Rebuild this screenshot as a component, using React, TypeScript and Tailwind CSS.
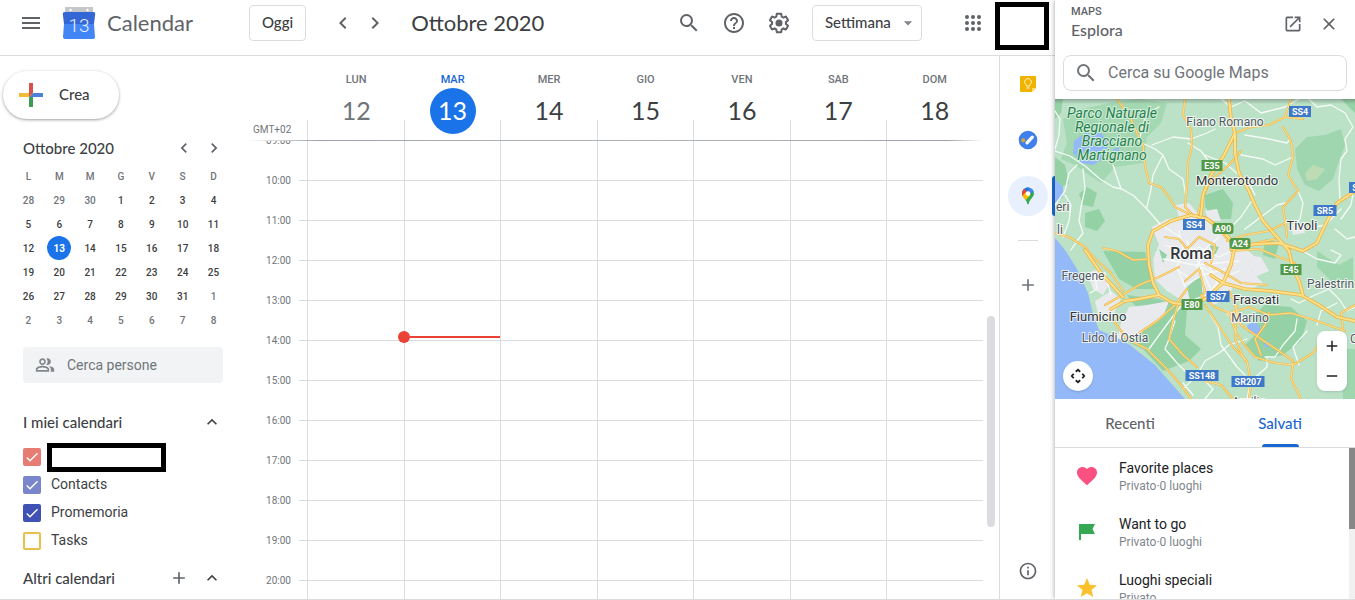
import { useState } from "react";
import type { ReactNode } from "react";
import {
  MdAdd,
  MdArrowDropDown,
  MdCheck,
  MdChevronLeft,
  MdChevronRight,
  MdClose,
  MdExpandLess,
  MdFavorite,
  MdHelpOutline,
  MdInfoOutline,
  MdMenu,
  MdOpenInNew,
  MdOutlinePeopleAlt,
  MdRemove,
  MdSearch,
  MdStar,
} from "react-icons/md";

const MINI_DAYS = ["L", "M", "M", "G", "V", "S", "D"];

const MINI_WEEKS = [
  [28, 29, 30, 1, 2, 3, 4],
  [5, 6, 7, 8, 9, 10, 11],
  [12, 13, 14, 15, 16, 17, 18],
  [19, 20, 21, 22, 23, 24, 25],
  [26, 27, 28, 29, 30, 31, 1],
  [2, 3, 4, 5, 6, 7, 8],
];

const WEEK = [
  { name: "LUN", day: 12 },
  { name: "MAR", day: 13 },
  { name: "MER", day: 14 },
  { name: "GIO", day: 15 },
  { name: "VEN", day: 16 },
  { name: "SAB", day: 17 },
  { name: "DOM", day: 18 },
];

const TODAY = 13;
const FIRST_HOUR = 9;
const HOUR_HEIGHT = 40;
const HOURS = Array.from({ length: 12 }, (_, i) => FIRST_HOUR + i);
const NOW = 13.9;

const CALENDARS = [
  { id: "owner", label: "", color: "border-[#e67c73] bg-[#e67c73]", checked: true },
  { id: "contacts", label: "Contacts", color: "border-[#7986cb] bg-[#7986cb]", checked: true },
  { id: "reminders", label: "Promemoria", color: "border-[#3f51b5] bg-[#3f51b5]", checked: true },
  { id: "tasks", label: "Tasks", color: "border-[#e9c04a] bg-white", checked: false },
];

const PLACES = [
  { name: "Favorite places", info: "Privato·0 luoghi", icon: <MdFavorite size={24} className="text-[#fa5082]" /> },
  { name: "Want to go", info: "Privato·0 luoghi", icon: <FlagIcon /> },
  { name: "Luoghi speciali", info: "Privato", icon: <MdStar size={24} className="text-[#fbc02d]" /> },
];

const googleFont = "font-['Google_Sans',Lato,sans-serif]";

function FlagIcon() {
  return (
    <svg width="24" height="24" viewBox="0 0 24 24">
      <path d="M4 4H20L17.500 9L20 14H6V20H4Z" fill="#34a853" />
    </svg>
  );
}

function GearIcon() {
  return (
    <svg width="24" height="24" viewBox="0 0 24 24" fill="currentColor">
      <path d="M13.85 22.25h-3.7c-.74 0-1.36-.54-1.45-1.27l-.27-1.89c-.27-.14-.53-.29-.79-.46l-1.8.72c-.7.26-1.47-.03-1.81-.65L2.2 15.53c-.35-.66-.2-1.44.36-1.88l1.53-1.19c-.01-.15-.02-.3-.02-.46 0-.15.01-.31.02-.46l-1.52-1.19c-.59-.45-.74-1.26-.37-1.88l1.85-3.19c.34-.62 1.11-.9 1.79-.63l1.81.73c.26-.17.52-.32.78-.46l.27-1.91c.09-.7.71-1.25 1.44-1.25h3.7c.74 0 1.36.54 1.45 1.27l.27 1.89c.27.14.53.29.79.46l1.8-.72c.71-.26 1.48.03 1.82.65l1.84 3.18c.36.66.2 1.44-.36 1.88l-1.52 1.19c.01.15.02.3.02.46s-.01.31-.02.46l1.52 1.19c.56.45.72 1.23.37 1.86l-1.86 3.22c-.34.62-1.11.9-1.8.63l-1.8-.72c-.26.17-.52.32-.78.46l-.27 1.91c-.1.68-.72 1.22-1.46 1.22zm-3.23-2h2.76l.37-2.55.53-.22c.44-.18.88-.44 1.34-.78l.45-.34 2.38.96 1.38-2.4-2.03-1.58.07-.56c.03-.26.06-.51.06-.78s-.03-.53-.06-.78l-.07-.56 2.03-1.58-1.39-2.4-2.39.96-.45-.35c-.42-.32-.87-.58-1.33-.77l-.52-.22-.37-2.55h-2.76l-.37 2.55-.53.21c-.44.19-.88.44-1.34.79l-.45.33-2.38-.95-1.39 2.39 2.03 1.58-.07.56a7 7 0 0 0-.06.79c0 .26.02.53.06.78l.07.56-2.03 1.58 1.38 2.4 2.39-.96.45.35c.43.33.86.58 1.33.77l.53.22.38 2.55z" />
      <circle cx="12" cy="12" r="3.500" />
    </svg>
  );
}

function AppsIcon() {
  return (
    <svg width="24" height="24" viewBox="0 0 24 24" fill="currentColor">
      {[6, 12, 18].map((cy) => [6, 12, 18].map((cx) => <circle key={`${cx}-${cy}`} cx={cx} cy={cy} r="2" />))}
    </svg>
  );
}

function CalendarLogo() {
  return (
    <svg width="34" height="34" viewBox="0 0 34 34">
      <path d="M3 1H31V8H3Z" fill="#c4c6c9" />
      <circle cx="8.500" cy="4" r="1.200" fill="#fff" />
      <circle cx="25.500" cy="4" r="1.200" fill="#fff" />
      <path d="M3 6H31Q33.500 6 33.200 8L32 18H2L.8 8Q.5 6 3 6Z" fill="#3367d6" />
      <path d="M2 18H32L33 31Q33 33 31 33H3Q1 33 1 31Z" fill="#4285f4" />
      <text x="17" y="26" textAnchor="middle" fontSize="19" fill="#e8f0fe" className="font-['Roboto',sans-serif] font-light">
        13
      </text>
    </svg>
  );
}

function KeepIcon() {
  return (
    <svg width="20" height="20" viewBox="0 0 20 20">
      <path d="M3 2H17Q18 2 18 3V14L14 18H3Q2 18 2 17V3Q2 2 3 2Z" fill="#f0b400" />
      <path d="M14 18V14H18Z" fill="#fbdc7c" />
      <path d="M8.300 12V10.800A3.300 3.300 0 1 1 11.700 10.800V12ZM8.300 14H11.700" fill="none" stroke="#fff3cf" strokeWidth="1" />
    </svg>
  );
}

function TasksIcon() {
  return (
    <svg width="20" height="20" viewBox="0 0 20 20">
      <circle cx="10" cy="10" r="9.300" fill="#4080ec" />
      <path d="M9 12.800L14.300 7.200" stroke="#fff" strokeWidth="3.200" strokeLinecap="round" />
      <circle cx="5.200" cy="10.300" r="2.100" fill="#d3a83c" />
    </svg>
  );
}

function PinIcon() {
  return (
    <svg width="20" height="20" viewBox="0 0 20 20">
      <clipPath id="pin">
        <path d="M10 1.500A6 6 0 0 0 4 7.600C4 11.300 8.200 13 9.200 17.400Q10 19.500 10.800 17.400C11.800 13 16 11.300 16 7.600A6 6 0 0 0 10 1.500Z" />
      </clipPath>
      <g clipPath="url(#pin)">
        <path d="M0 0H20V20H0Z" fill="#34a853" />
        <path d="M8 0H20V3L10 9Z" fill="#4285f4" />
        <path d="M9 0L11 3L6 9L0 5V0Z" fill="#1a73e8" />
        <path d="M0 2L6 2L9 6L5 12L0 12Z" fill="#ea4335" />
        <path d="M3 11L8 6L12.500 9L6 16Z" fill="#fbbc04" />
      </g>
      <circle cx="10" cy="7.600" r="2.300" fill="#fff" />
    </svg>
  );
}

function MoveIcon() {
  return (
    <svg width="16" height="16" viewBox="0 0 18 18" fill="none" stroke="#202124" strokeWidth="2">
      <path d="M6.500 4.200L9 2L11.500 4.200M6.500 13.800L9 16L11.500 13.800M4.200 6.500L2 9L4.200 11.500M13.800 6.500L16 9L13.800 11.500" />
    </svg>
  );
}

function IconButton({ label, children }: { label: string; children: ReactNode }) {
  return (
    <button type="button" aria-label={label} className="flex shrink-0 items-center justify-center text-[#5f6368]">
      {children}
    </button>
  );
}

function Header() {
  return (
    <header className="flex h-14 shrink-0 items-start border-b border-[#dadce0] pr-[6px]">
      <div className="flex h-[46px] flex-1 items-center">
        <div className="flex w-[249px] shrink-0 items-center pl-[19px]">
          <IconButton label="Menu principale">
            <MdMenu size={24} />
          </IconButton>
          <a href="#" className={`ml-[19px] flex items-center gap-[11px] text-[22px] text-[#5f6368] ${googleFont}`}>
            <CalendarLogo />
            <span className="pb-[2px]">Calendar</span>
          </a>
        </div>
        <button
          type="button"
          className={`h-9 rounded border border-[#dadce0] px-3 pb-[2px] text-[15px] font-medium text-[#3c4043] ${googleFont}`}
        >
          Oggi
        </button>
        <div className="ml-[25px] flex gap-2">
          <IconButton label="Settimana precedente">
            <MdChevronLeft size={24} />
          </IconButton>
          <IconButton label="Settimana successiva">
            <MdChevronRight size={24} />
          </IconButton>
        </div>
        <h1 className={`ml-6 flex-1 pb-[2px] text-[22px] text-[#3c4043] ${googleFont}`}>Ottobre 2020</h1>
        <div className="flex items-center gap-[21px]">
          <IconButton label="Cerca">
            <MdSearch size={24} />
          </IconButton>
          <IconButton label="Assistenza">
            <MdHelpOutline size={24} />
          </IconButton>
          <IconButton label="Impostazioni">
            <GearIcon />
          </IconButton>
          <div className="relative">
            <select
              aria-label="Visualizzazione"
              className={`h-9 w-[110px] appearance-none rounded border border-[#dadce0] bg-white pb-[2px] pl-3 text-[15px] font-medium text-[#3c4043] ${googleFont}`}
            >
              <option>Settimana</option>
            </select>
            <MdArrowDropDown size={20} className="pointer-events-none absolute top-2 right-1 text-[#80868b]" />
          </div>
        </div>
        <div className="mr-[10px] ml-[39px]">
          <IconButton label="App Google">
            <AppsIcon />
          </IconButton>
        </div>
      </div>
      <button type="button" aria-label="Account" className="mt-[2px] h-12 w-[54px] border-5 border-black bg-white" />
    </header>
  );
}

function MiniCalendar() {
  return (
    <section className="mt-[17px]">
      <div className="flex h-6 items-center pr-6 pl-[23px]">
        <h2 className={`flex-1 text-[15px] font-medium text-[#3c4043] ${googleFont}`}>Ottobre 2020</h2>
        <div className="flex gap-[10px]">
          <IconButton label="Mese precedente">
            <MdChevronLeft size={20} />
          </IconButton>
          <IconButton label="Mese successivo">
            <MdChevronRight size={20} />
          </IconButton>
        </div>
      </div>
      <table className="mt-1 ml-[13px] w-[216px] table-fixed text-center text-[10px] font-medium">
        <thead>
          <tr className="h-6 text-[#70757a]">
            {MINI_DAYS.map((d, i) => (
              <th key={i} className="p-0 font-medium">
                {d}
              </th>
            ))}
          </tr>
        </thead>
        <tbody>
          {MINI_WEEKS.map((week, w) => (
            <tr key={w} className="h-6">
              {week.map((day) => {
                const outside = (w === 0 && day > 20) || (w > 3 && day < 10);
                const today = day === TODAY && !outside;
                return (
                  <td key={day} className={outside ? "p-0 text-[#70757a]" : "p-0 text-[#3c4043]"}>
                    <span
                      className={
                        today
                          ? "mx-auto flex size-6 items-center justify-center rounded-full bg-[#1a73e8] font-bold text-white"
                          : "mx-auto flex size-6 items-center justify-center"
                      }
                    >
                      {day}
                    </span>
                  </td>
                );
              })}
            </tr>
          ))}
        </tbody>
      </table>
    </section>
  );
}

function CalendarList() {
  const [checked, setChecked] = useState<Record<string, boolean>>(
    Object.fromEntries(CALENDARS.map((c) => [c.id, c.checked]))
  );

  return (
    <ul className="mt-[11px] pl-[23px]">
      {CALENDARS.map((cal) => (
        <li key={cal.id} className="flex h-7 items-center">
          <label className="flex items-center text-sm text-[#3c4043]">
            <span className="relative flex size-[18px]">
              <input
                type="checkbox"
                aria-label={cal.label || "Calendario personale"}
                checked={checked[cal.id]}
                onChange={(e) => setChecked({ ...checked, [cal.id]: e.target.checked })}
                className={`size-[18px] appearance-none rounded-[2px] border-2 ${cal.color}`}
              />
              {checked[cal.id] && (
                <MdCheck size={16} className="pointer-events-none absolute top-px left-px text-white" />
              )}
            </span>
            {cal.label ? (
              <span className="ml-[10px] pb-[2px]">{cal.label}</span>
            ) : (
              <span className="ml-[6px] h-[29px] w-[119px] border-5 border-black bg-white" />
            )}
          </label>
        </li>
      ))}
    </ul>
  );
}

function Sidebar() {
  return (
    <aside className="w-[248px] shrink-0 overflow-hidden pt-[15px]">
      <button
        type="button"
        className={`ml-[3px] flex h-12 w-[116px] items-center gap-4 rounded-full bg-white pl-4 text-[15px] font-medium text-[#3c4043] shadow-[0_1px_2px_0_rgba(60,64,67,0.3),0_1px_3px_1px_rgba(60,64,67,0.15)] ${googleFont}`}
      >
        <svg width="24" height="24" viewBox="0 0 24 24">
          <path d="M14 10H24V14H10Z" fill="#4b80d9" />
          <path d="M10 14H14V24H10Z" fill="#3c9b54" />
          <path d="M0 10H14L10 14H0Z" fill="#f0bd35" />
          <path d="M10 0H14V10L10 14Z" fill="#d8504a" />
        </svg>
        <span className="pb-[2px]">Crea</span>
      </button>
      <MiniCalendar />
      <label className="mt-[15px] ml-[23px] flex h-9 w-[200px] items-center gap-3 rounded bg-[#f1f3f4] pl-3 text-[#80868b]">
        <MdOutlinePeopleAlt size={20} className="shrink-0" />
        <input
          aria-label="Cerca persone"
          placeholder="Cerca persone"
          className="w-full bg-transparent text-sm placeholder:text-[#70757a]"
        />
      </label>
      <div className="mt-[29px] flex h-5 items-center pr-[26px] pl-[23px]">
        <h2 className={`flex-1 text-[15px] font-medium text-[#3c4043] ${googleFont}`}>I miei calendari</h2>
        <IconButton label="Comprimi i miei calendari">
          <MdExpandLess size={20} className="text-[#3c4043]" />
        </IconButton>
      </div>
      <CalendarList />
      <div className="mt-[13px] flex h-5 items-center gap-[13px] pr-[26px] pl-[23px]">
        <h2 className={`flex-1 text-[15px] font-medium text-[#3c4043] ${googleFont}`}>Altri calendari</h2>
        <IconButton label="Aggiungi calendario">
          <MdAdd size={20} />
        </IconButton>
        <IconButton label="Comprimi altri calendari">
          <MdExpandLess size={20} className="text-[#3c4043]" />
        </IconButton>
      </div>
    </aside>
  );
}

function WeekView() {
  return (
    <main className="flex min-w-0 flex-1">
      <div className="flex min-w-0 flex-1 flex-col">
        <div className="flex h-[84px] shrink-0">
          <div className="flex w-[59px] shrink-0 items-end pb-[3px] pl-[5px] text-[10px] text-[#70757a]">GMT+02</div>
          <div className="flex-1">
            <div className="grid h-[84px] grid-cols-7 pl-px">
              {WEEK.map(({ name, day }) => {
                const today = day === TODAY;
                return (
                  <div key={day} className="flex flex-col items-center pt-4">
                    <span className={`text-[11px] leading-4 font-medium ${today ? "text-[#1967d2]" : "text-[#70757a]"}`}>
                      {name}
                    </span>
                    <span
                      className={`flex size-[46px] items-center justify-center rounded-full text-[25px] ${googleFont} ${
                        today ? "bg-[#1a73e8] text-white" : day < TODAY ? "text-[#70757a]" : "text-[#3c4043]"
                      }`}
                    >
                      {day}
                    </span>
                  </div>
                );
              })}
            </div>
            <div className="-mt-5 grid h-5 grid-cols-7">
              {WEEK.map(({ day }) => (
                <div key={day} className="border-l border-[#dadce0]" />
              ))}
            </div>
          </div>
        </div>
        <div className="h-px shrink-0 bg-linear-to-r from-transparent via-[#9aa0a6] via-10% to-transparent" />
        <div className="-mt-px h-px shrink-0 bg-linear-to-r from-transparent via-[#9aa0a6] via-95% to-transparent" />
        <div className="flex min-h-0 flex-1 overflow-hidden">
          <div className="-mt-[21px] w-[43px] shrink-0 text-right text-[10px] text-[#70757a]">
            {HOURS.map((h) => (
              <div key={h} className="flex h-10 items-center justify-end">
                {String(h).padStart(2, "0")}:00
              </div>
            ))}
          </div>
          <div className="ml-2 w-2 shrink-0">
            {HOURS.map((h) => (
              <div key={h} className="h-10 border-b border-[#dadce0]" />
            ))}
          </div>
          <div className="grid flex-1 grid-cols-7">
            {WEEK.map(({ day }) => (
              <div key={day} className="relative border-l border-[#dadce0]">
                {HOURS.map((h) => (
                  <div key={h} className="h-10 border-b border-[#dadce0]" />
                ))}
                {day === TODAY && (
                  <div
                    className="absolute -left-[7px] right-0 z-10 flex items-center"
                    style={{ top: (NOW - FIRST_HOUR) * HOUR_HEIGHT - 6 }}
                  >
                    <span className="size-3 rounded-full bg-[#ea4335]" />
                    <span className="h-[2px] flex-1 bg-[#ea4335]" />
                  </div>
                )}
              </div>
            ))}
          </div>
        </div>
      </div>
      <div className="flex w-4 shrink-0 flex-col items-center pt-[260px]">
        <div className="h-[211px] w-2 rounded-full bg-[#dadce0]" />
      </div>
    </main>
  );
}

function Rail() {
  return (
    <nav className="flex w-14 shrink-0 flex-col items-center border-l border-[#dadce0] pt-2">
      <button type="button" aria-label="Keep" className="flex size-10 items-center justify-center">
        <KeepIcon />
      </button>
      <button type="button" aria-label="Tasks" className="mt-4 flex size-10 items-center justify-center">
        <TasksIcon />
      </button>
      <div className="mt-4 flex w-full items-center justify-end">
        <button type="button" aria-label="Maps" className="mr-1 flex size-10 items-center justify-center rounded-full bg-[#e8f0fe]">
          <PinIcon />
        </button>
        <span className="h-10 w-[3px] rounded-l bg-[#1967d2]" />
      </div>
      <div className="mt-6 h-px w-5 bg-[#dadce0]" />
      <button type="button" aria-label="Componenti aggiuntivi" className="mt-[34px] text-[#70757a]">
        <MdAdd size={20} />
      </button>
      <button type="button" aria-label="Informazioni" className="mt-auto mb-[18px] text-[#5f6368]">
        <MdInfoOutline size={20} />
      </button>
    </nav>
  );
}

const MINOR_ROADS = [
  "M0 52L15 57L30 67L45 80L58 88L67 90L79 97L92 110L105 125L125 138",
  "M0 12L5 20L4 36L0 50M22 66L14 74L10 92L0 106",
  "M28 70L30 90L26 108L24 122L28 134L22 142L16 151",
  "M10 96L16 106L14 122L8 138",
  "M58 66L64 84L66 90",
  "M85 43L100 50L108 56L114 70L128 80L131 98",
  "M108 56L98 76L96 90L92 108",
  "M97 46L118 38L136 40L152 34L160 30",
  "M104 8L92 14L88 26L84 42",
  "M133 44L146 52L152 60L158 70",
  "M190 36L214 40L232 44L235 40",
  "M186 56L208 60L220 66L238 58",
  "M150 56L170 64L184 76L196 88L200 96",
  "M166 0L176 8L190 2L206 14L230 8L244 0",
  "M254 0L262 8L276 6L290 14L298 28L290 40L292 52L286 60L284 80L285 100",
  "M243 92L248 104L245 120L236 128M190 130L206 118L222 106L230 104",
  "M174 130L186 118L198 100",
  "M280 130L292 140L300 138M286 120L296 106L300 84",
  "M250 130L270 126L286 110",
  "M236 200L244 204L260 196L274 190L284 200L292 212L300 208",
  "M246 151L262 160L280 164L286 156L276 151",
  "M242 220L240 232L228 246L220 258L210 258",
  "M192 240L174 246L164 254L150 262L142 276L128 290",
  "M155 215L163 228L166 246L182 268L190 276",
  "M120 222L114 240L110 250L122 264L136 278L150 282",
  "M212 258L212 268L196 282L192 300",
  "M150 282L158 290L150 300M128 284L138 296",
  "M35 194L42 190L40 176L50 174L56 196",
  "M94 250L110 228L128 204L152 196L172 180",
  "M150 200L162 184L154 166L160 150",
  "M120 170L134 178L148 168L166 180L184 172",
  "M110 146L128 154L144 148L164 158L180 150",
  "M124 132L128 150L122 168L130 188",
  "M164 138L150 150L142 168L150 186",
  "M132 142L146 168L158 196M108 160L140 166L184 162M130 186L148 176L170 170",
  "M262 226L266 212L282 204M244 266L238 248L252 232",
];

const MAIN_ROADS = [
  "M62 0L72 14L78 24L82 34L88 46L90 66L94 84L106 88L114 98L120 108L132 114L134 116",
  "M130 0L128 16L136 30L137 46L133 64L132 88L130 108L138 116",
  "M0 134L14 138L30 148L40 160L56 174L68 192",
  "M94 160L78 161L62 152L48 149",
  "M236 0L230 18L248 20M230 18L214 26L196 28L180 34",
  "M228 28L236 42L238 58L233 76L243 92L228 108L230 122L232 138",
  "M230 124L214 132L190 136L172 142",
  "M150 88L160 78L174 66L186 52",
  "M150 118L162 126L170 138L184 150L200 144L220 140",
  "M148 128L142 118L148 98L156 80",
  "M110 138L124 140L132 150L144 138L160 146L156 164",
  "M176 152L204 150L224 158L240 164",
  "M150 164L166 172L186 184L212 186",
  "M146 196L160 208L174 214L180 232L188 244L200 258L220 264L238 266L258 254L270 236",
  "M180 206L186 226L206 240L224 252L238 262",
  "M174 214L194 208L214 216L236 214L262 222L290 232",
  "M214 214L210 226L200 240L206 256",
  "M150 206L178 248L192 262L196 284L194 300",
  "M238 264L236 280L246 300",
  "M174 192L182 208L180 240L190 262",
  "M124 202L118 222L114 240L128 256L142 268",
  "M150 282L166 286L178 300",
  "M132 190L120 206L102 222L84 234",
  "M130 182L144 170L150 192L142 208",
  "M50 206L64 198L84 186L104 178L124 168",
  "M56 218L72 240L92 250L112 270L126 286L136 300",
  "M288 230L286 214L300 206",
];

const MOTORWAYS = [
  "M174 0L176 20L180 34L180 54L184 74L194 92L200 106L208 122L222 138L234 152",
  "M180 34L168 58L156 76L148 96L146 116",
  "M136 116L116 122L98 132L93 146L94 166L98 184L104 196",
  "M136 116L152 120L168 132L180 146L176 166L168 184",
  "M104 196L118 204L136 206L150 200L168 184L156 176",
  "M104 196L84 200L70 202L56 210",
  "M68 198L46 174L30 151",
  "M168 184L190 190L216 192L246 196L264 206L282 218L300 222",
  "M234 152L238 170L244 182L248 196",
  "M176 150L200 145L224 144L248 152L262 144L270 126L282 104L300 92",
];

type MapLabel = { text: string; x: number; y: number; size?: number; start?: boolean; bold?: boolean };

const TOWNS: MapLabel[] = [
  { text: "Fiano Romano", x: 170, y: 27 },
  { text: "Monterotondo", x: 182, y: 86, size: 13 },
  { text: "Tivoli", x: 247, y: 131, size: 13 },
  { text: "Roma", x: 136, y: 160, size: 16, bold: true },
  { text: "Fregene", x: 28, y: 181 },
  { text: "Fiumicino", x: 43, y: 222, size: 13 },
  { text: "Lido di Ostia", x: 60, y: 243 },
  { text: "Frascati", x: 201, y: 205, size: 13 },
  { text: "Marino", x: 195, y: 223 },
  { text: "Palestrin", x: 252, y: 189, start: true },
  { text: "eri", x: 1, y: 112, start: true },
  { text: "li", x: 2, y: 135, start: true },
  { text: "C", x: 295, y: 244, start: true },
  { text: "Aprilia", x: 194, y: 307 },
];

const SHIELDS = [
  { text: "SS4", x: 245, y: 12, w: 22, fill: "#3d78c9" },
  { text: "E35", x: 157, y: 66, w: 21, fill: "#53994a" },
  { text: "S", x: 300, y: 88, w: 12, fill: "#3d78c9" },
  { text: "SR5", x: 270, y: 111, w: 23, fill: "#3d78c9" },
  { text: "SS4", x: 139, y: 125, w: 22, fill: "#3d78c9" },
  { text: "A90", x: 168, y: 129, w: 21, fill: "#53994a" },
  { text: "A24", x: 185, y: 144, w: 21, fill: "#53994a" },
  { text: "E45", x: 236, y: 170, w: 21, fill: "#53994a" },
  { text: "SS7", x: 163, y: 197, w: 23, fill: "#3d78c9" },
  { text: "E80", x: 137, y: 205, w: 21, fill: "#53994a" },
  { text: "SS148", x: 147, y: 276, w: 33, fill: "#3d78c9" },
  { text: "SR207", x: 193, y: 282, w: 33, fill: "#3d78c9" },
];

function RomeMap() {
  return (
    <svg viewBox="0 0 300 300" className="block w-full font-['Roboto',sans-serif]" role="img" aria-label="Mappa di Roma">
      <defs>
        <linearGradient id="edge" x1="0" y1="0" x2="0" y2="1">
          <stop offset="0" stopColor="#3c4043" stopOpacity="0.350" />
          <stop offset="1" stopColor="#3c4043" stopOpacity="0" />
        </linearGradient>
      </defs>
      <rect width="300" height="300" fill="#bbe2c6" />
      <g fill="#94d2a5">
        <path d="M8 20L28 10L54 4L84 0L112 4L106 24L92 38L88 64L60 68L46 84L34 76L20 66L6 60L12 44Z" opacity="0.600" />
        <path d="M24 95L32 88L42 94L38 108L28 106ZM30 114L44 110L50 122L42 132L30 128ZM0 58L10 66L14 84L0 92Z" />
        <path d="M240 50L252 38L270 36L286 30L290 46L284 62L278 80L264 92L250 86L242 70Z" opacity="0.700" />
        <path d="M150 96L168 90L178 104L176 120L160 120L150 108Z" />
        <path d="M48 152L90 153L94 168L100 190L82 190L64 180Z" />
        <path d="M72 196L104 200L132 210L130 236L146 250L134 262L108 272L88 250L66 240L90 220Z" />
        <path d="M196 218L210 206L236 208L252 222L246 242L228 256L204 262L190 246L202 234Z" />
        <path d="M262 152L284 166L298 158V186L278 184L262 168ZM286 250H300V300H288Z" opacity="0.750" />
        <path d="M0 0H8L6 14L0 20ZM286 0H300V14ZM210 140L224 144L220 160L208 156ZM112 138L124 140L120 152L108 150Z" />
      </g>
      <path d="M250 74L258 66L270 70L262 80L252 82Z" fill="#bddbb4" />
      <g fill="#e8eaed">
        <path d="M97 128L112 120L130 118L146 116L158 126L172 140L186 146L198 156L208 166L196 172L208 184L196 190L178 188L172 200L158 206L146 200L128 202L112 192L100 180L98 160L104 146Z" />
        <path d="M74 208L92 206L114 202L108 218L94 228L80 238L62 240L66 224ZM40 202L56 192L66 200L58 216L44 220ZM32 174L44 170L54 186L48 196L38 190Z" />
        <path d="M120 106L134 104L144 116L124 118ZM150 112L162 110L166 122L154 122ZM188 156L206 158L214 172L200 178ZM168 210L186 216L178 224ZM236 128L248 124L250 134L238 136Z" />
      </g>
      <path d="M132 188L146 176L148 200L136 206ZM104 150L112 156L108 164ZM154 146L164 148L160 156Z" fill="#94d2a5" />
      <g fill="#93b9f8">
        <path d="M0 139L6 146L10 151L22 170L33 194L38 215L44 231L60 238L75 246L100 266L115 283L130 300H0Z" />
        <path d="M19 42L30 34L46 34L54 44L48 60L38 66L26 64L18 54Z" />
        <path d="M58 50L64 48L64 54L59 54ZM0 80L8 88L8 98L0 104Z" />
        <path d="M192 226L200 222L206 230L202 236L194 234ZM209 244L213 242L214 248L210 248Z" />
      </g>
      <g fill="none" strokeLinejoin="round" strokeLinecap="round">
        <path d={MINOR_ROADS.join("")} stroke="#f6fbf7" strokeWidth="1.300" />
        <path d={MAIN_ROADS.join("")} stroke="#efb84a" strokeWidth="2.200" />
        <path d={MAIN_ROADS.join("")} stroke="#fde293" strokeWidth="1" />
        <path d={MOTORWAYS.join("")} stroke="#efb441" strokeWidth="3.600" />
        <path d={MOTORWAYS.join("")} stroke="#fde08a" strokeWidth="2" />
      </g>
      <g fontSize="14" fontStyle="italic" fill="#23804d" stroke="#d5eedb" strokeWidth="2" paintOrder="stroke" textAnchor="middle">
        <text x="57" y="19">Parco Naturale</text>
        <text x="57" y="33">Regionale di</text>
        <text x="57" y="47">Bracciano</text>
        <text x="57" y="61">Martignano</text>
      </g>
      {SHIELDS.map((s) => (
        <g key={`${s.text}-${s.x}`}>
          <rect x={s.x - s.w / 2} y={s.y - 5} width={s.w} height="11" rx={s.text.startsWith("A") ? 3 : 0} fill={s.fill} />
          <text x={s.x} y={s.y + 4} fontSize="9" fontWeight="700" fill="#fff" textAnchor="middle">
            {s.text}
          </text>
        </g>
      ))}
      {TOWNS.map((t) => (
        <text
          key={t.text}
          x={t.x}
          y={t.y}
          fontSize={t.size ?? 12}
          fontWeight={t.bold ? 500 : 400}
          fill={t.size ? "#303438" : "#505860"}
          stroke="#fff"
          strokeOpacity="0.800"
          strokeWidth="2"
          paintOrder="stroke"
          textAnchor={t.start ? "start" : "middle"}
        >
          {t.text}
        </text>
      ))}
      <rect width="300" height="5" fill="url(#edge)" />
    </svg>
  );
}

function MapsPanel() {
  return (
    <aside className="z-10 flex w-[300px] shrink-0 flex-col bg-white shadow-[0_0_5px_rgba(60,64,67,0.5)]">
      <div className="flex h-[47px] shrink-0 items-center gap-4 pr-4 pl-4">
        <div className="flex-1 pb-1">
          <p className="text-[11px] leading-4 font-medium text-[#5f6368]">MAPS</p>
          <h2 className={`text-base leading-5 font-medium text-[#5f6368] ${googleFont}`}>Esplora</h2>
        </div>
        <IconButton label="Apri in una nuova scheda">
          <MdOpenInNew size={20} />
        </IconButton>
        <IconButton label="Chiudi">
          <MdClose size={20} />
        </IconButton>
      </div>
      <label className="mx-2 mt-2 flex h-9 shrink-0 items-center gap-[10px] rounded-lg border border-[#dadce0] pl-[10px] text-[#70757a]">
        <MdSearch size={24} className="shrink-0" />
        <input
          aria-label="Cerca su Google Maps"
          placeholder="Cerca su Google Maps"
          className="w-full bg-transparent text-base placeholder:text-[#70757a]"
        />
      </label>
      <div className="relative mt-2 shrink-0 overflow-hidden">
        <RomeMap />
        <button
          type="button"
          aria-label="Sposta mappa"
          className="absolute bottom-2 left-2 flex size-[30px] items-center justify-center rounded-full bg-white shadow"
        >
          <MoveIcon />
        </button>
        <div className="absolute right-2 bottom-2 flex w-[30px] flex-col rounded-lg bg-white text-[#202124] shadow">
          <button type="button" aria-label="Aumenta zoom" className="flex h-[30px] items-center justify-center">
            <MdAdd size={18} />
          </button>
          <button type="button" aria-label="Riduci zoom" className="flex h-[30px] items-center justify-center">
            <MdRemove size={18} />
          </button>
        </div>
      </div>
      <div className={`flex h-[49px] shrink-0 border-b border-[#dadce0] text-[15px] font-medium ${googleFont}`}>
        <button type="button" className="flex-1 text-[#5f6368]">
          Recenti
        </button>
        <button type="button" className="flex flex-1 flex-col items-center text-[#1967d2]">
          <span className="flex flex-1 items-center pt-[3px]">Salvati</span>
          <span className="h-[3px] w-[37px] rounded-t bg-[#1967d2]" />
        </button>
      </div>
      <div className="flex min-h-0 flex-1 overflow-hidden">
        <ul className="flex-1">
          {PLACES.map((place) => (
            <li key={place.name} className="flex h-14 items-center gap-5 pl-5">
              {place.icon}
              <div className="pb-px">
                <p className="text-sm text-[#202124]">{place.name}</p>
                <p className="text-xs text-[#80868b]">{place.info}</p>
              </div>
            </li>
          ))}
        </ul>
        <div className="w-[6px] bg-[#f1f1f1]">
          <div className="h-[81px] bg-[#878787]" />
        </div>
      </div>
    </aside>
  );
}

export default function App() {
  return (
    <div className="flex h-screen overflow-hidden border-b border-[#dadce0] bg-white font-['Roboto',sans-serif]">
      <div className="flex min-w-0 flex-1 flex-col">
        <Header />
        <div className="flex min-h-0 flex-1">
          <Sidebar />
          <WeekView />
          <Rail />
        </div>
      </div>
      <MapsPanel />
    </div>
  );
}
